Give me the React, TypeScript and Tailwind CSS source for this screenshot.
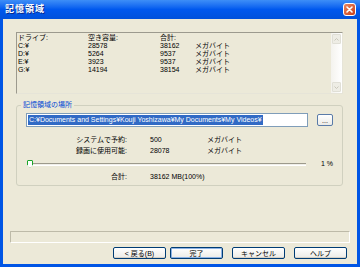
import React from "react";

const font = { fontFamily: '"Liberation Sans", "Noto Sans CJK JP", sans-serif' };

const drives = [
  { d: "C:¥", free: "28578", total: "38162" },
  { d: "D:¥", free: "5264", total: "9537" },
  { d: "E:¥", free: "3923", total: "9537" },
  { d: "G:¥", free: "14194", total: "38154" },
];

// XP style push button
const Btn: React.FC<{ label: string; w?: string; def?: boolean }> = ({ label, w = "w-[53px]", def }) => (
  <div
    className={`${w} h-[12px] rounded-[2px] border border-[#003c74] bg-gradient-to-b from-white to-[#ecebe6] flex items-center justify-center text-[7px] leading-none text-black ${
      def ? "shadow-[inset_0_0_0_1px_#8db2e3]" : "shadow-[inset_0_-1px_0_#d6d0c5]"
    }`}
  >
    {label}
  </div>
);

export default function App() {
  return (
    <div className="w-[360px] h-[267px] bg-[#0055e5] flex flex-col select-none" style={font}>
      {/* Title bar */}
      <div className="h-[19px] flex items-center pl-[5px] pr-[4px] bg-gradient-to-b from-[#3d8ef7] via-[#0058ee] to-[#0051db]">
        <span className="text-white font-bold text-[9px] leading-none tracking-[1px] [text-shadow:1px_1px_0_#0a2a8a]">記憶領域</span>
        <div className="ml-auto w-[13px] h-[13px] rounded-[3px] border border-white bg-gradient-to-br from-[#e98560] to-[#c83c12] flex items-center justify-center">
          <svg width="7" height="7" viewBox="0 0 7 7">
            <path d="M1 1 L6 6 M6 1 L1 6" stroke="white" strokeWidth="1.6" strokeLinecap="round" />
          </svg>
        </div>
      </div>

      {/* Client area */}
      <div className="flex-1 mx-[3px] mb-[3px] bg-[#ece9d8] flex flex-col text-[7px] leading-[8px] text-black">
        {/* Drive list */}
        <div className="mt-[13px] ml-[13px] w-[327px] h-[62px] border border-[#9c9a8e] border-r-[#e6e4d8] border-b-[#e6e4d8] bg-[#ece9d8] flex">
          <div className="flex-1 pt-[1px] pl-[1px]">
            <div className="flex">
              <span className="w-[70px]">ドライブ:</span>
              <span className="w-[72px]">空き容量:</span>
              <span className="w-[35px]">合計:</span>
            </div>
            {drives.map((r) => (
              <div key={r.d} className="flex">
                <span className="w-[70px]">{r.d}</span>
                <span className="w-[72px]">{r.free}</span>
                <span className="w-[35px]">{r.total}</span>
                <span>メガバイト</span>
              </div>
            ))}
          </div>
          {/* Scrollbar */}
          <div className="w-[11px] flex flex-col bg-gradient-to-r from-[#f4f3ee] to-white">
            <div className="h-[10px] m-[1px] rounded-[1px] bg-[#eeede5] border border-[#e0dfd6] flex items-center justify-center">
              <svg width="5" height="3" viewBox="0 0 5 3">
                <path d="M0.5 2.5 L2.5 0.5 L4.5 2.5" stroke="#c9c7ba" strokeWidth="1" fill="none" />
              </svg>
            </div>
            <div className="flex-1" />
            <div className="h-[10px] m-[1px] rounded-[1px] bg-[#eeede5] border border-[#e0dfd6] flex items-center justify-center">
              <svg width="5" height="3" viewBox="0 0 5 3">
                <path d="M0.5 0.5 L2.5 2.5 L4.5 0.5" stroke="#c9c7ba" strokeWidth="1" fill="none" />
              </svg>
            </div>
          </div>
        </div>

        {/* Group box */}
        <div className="relative mt-[11px] ml-[13px] w-[327px] h-[81px] border border-[#d0d0bf] rounded-[3px] pt-[7px] px-[9px]">
          <span className="absolute -top-[5px] left-[4px] px-[2px] bg-[#ece9d8] text-[#0046d5]">記憶領域の場所</span>
          <div className="flex items-center">
            <div className="w-[282px] h-[14px] border border-[#7f9db9] bg-white flex items-center pl-[1px] overflow-hidden">
              <span className="bg-[#316ac5] text-white whitespace-nowrap leading-[10px] px-[1px]">
                C:¥Documents and Settings¥Kouji Yoshizawa¥My Documents¥My Videos¥
              </span>
            </div>
            <div className="ml-[9px] w-[16px] h-[12px] rounded-[2px] border border-[#5a7ba8] bg-gradient-to-b from-white to-[#ecebe6] flex items-center justify-center leading-none">
              ...
            </div>
          </div>

          <div className="mt-[9px] flex">
            <span className="w-[101px] text-right">システムで予約:</span>
            <span className="ml-[23px] w-[57px]">500</span>
            <span>メガバイト</span>
          </div>
          <div className="mt-[3px] flex">
            <span className="w-[101px] text-right">録画に使用可能:</span>
            <span className="ml-[23px] w-[57px]">28078</span>
            <span>メガバイト</span>
          </div>

          {/* Slider */}
          <div className="mt-[5px] flex items-center h-[8px] whitespace-nowrap">
            <div className="relative ml-[1px] w-[279px] h-[3px] border-t border-[#9d9a8c] border-b border-b-white bg-[#f0efe9]">
              <div className="absolute left-0 -top-[4px] w-[6px] h-[8px] rounded-t-[1px] border border-[#1ba529] bg-white [clip-path:polygon(0_0,100%_0,100%_65%,50%_100%,0_65%)]" />
            </div>
            <span className="ml-[15px]">1 %</span>
          </div>

          <div className="mt-[5px] flex">
            <span className="w-[101px] text-right">合計:</span>
            <span className="ml-[23px]">38162 MB(100%)</span>
          </div>
        </div>

        {/* Status panel */}
        <div className="mt-[45px] ml-[7px] w-[340px] h-[12px] border border-[#bdbaa8] border-r-white border-b-white rounded-[1px]" />

        {/* Buttons */}
        <div className="mt-[4px] ml-[110px] flex gap-[4px]">
          <Btn label="< 戻る(B)" />
          <Btn label="完了" def />
          <div className="w-[1px]" />
          <Btn label="キャンセル" />
          <div className="w-[1px]" />
          <Btn label="ヘルプ" />
        </div>
      </div>
    </div>
  );
}
